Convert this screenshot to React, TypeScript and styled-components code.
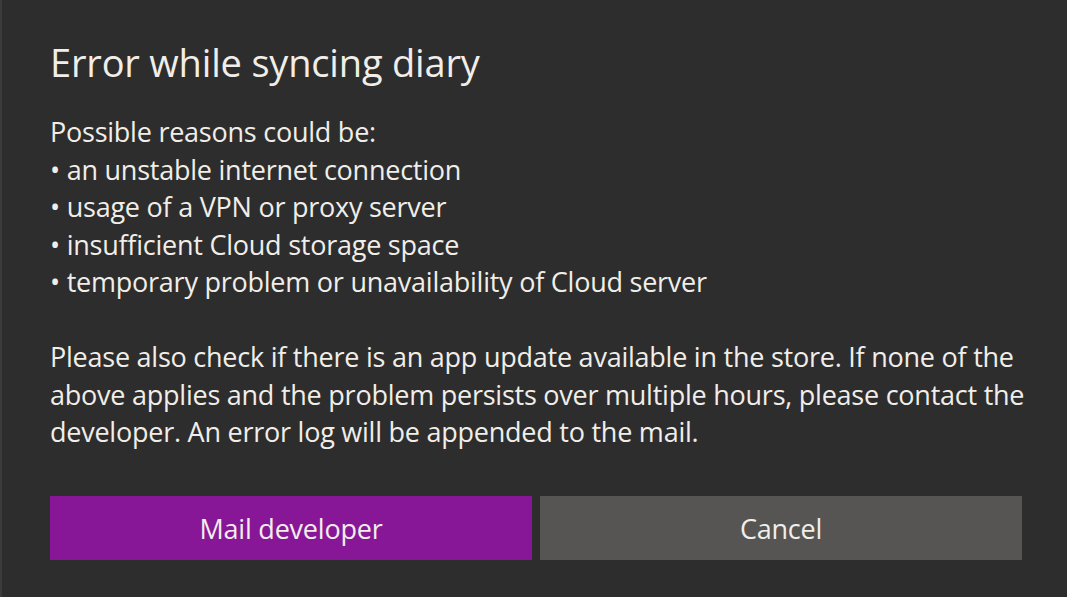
import styled, { createGlobalStyle } from "styled-components";

const COLOR_BACKGROUND = "#2d2d2d";
const COLOR_TEXT = "#f1eeea";
const COLOR_ACCENT = "#881798";
const COLOR_BUTTON = "#565553";

const GlobalStyle = createGlobalStyle`
  html, body {
    margin: 0;
    padding: 0;
    background-color: ${COLOR_BACKGROUND};
  }
  * {
    box-sizing: border-box;
  }
`;

const reasons = [
  "an unstable internet connection",
  "usage of a VPN or proxy server",
  "insufficient Cloud storage space",
  "temporary problem or unavailability of Cloud server",
];

const hintLines = [
  "Please also check if there is an app update available in the store. If none of the",
  "above applies and the problem persists over multiple hours, please contact the",
  "developer. An error log will be appended to the mail.",
];

function App() {
  return (
    <>
      <GlobalStyle />
      <Dialog>
        <Title>Error while syncing diary</Title>
        <Content>
          <Paragraph>Possible reasons could be:</Paragraph>
          <ReasonList>
            {reasons.map((reason) => (
              <Reason key={reason}>• {reason}</Reason>
            ))}
          </ReasonList>
          <Hint>
            {hintLines.map((line) => (
              <Line key={line}>{line}</Line>
            ))}
          </Hint>
        </Content>
        <ButtonRow>
          <Button $primary>Mail developer</Button>
          <Button>Cancel</Button>
        </ButtonRow>
      </Dialog>
    </>
  );
}

const Dialog = styled.div`
  width: 1067px;
  height: 597px;
  padding: 38px 45px 0 48px;
  border-left: 2px solid #3b3b3b;
  background-color: ${COLOR_BACKGROUND};
  color: ${COLOR_TEXT};
  font-family: "Open Sans", "Noto Sans", sans-serif;
  display: flex;
  flex-direction: column;
  overflow: hidden;
`;

const Title = styled.h1`
  margin: 0;
  font-size: 38px;
  line-height: 48px;
  font-weight: 400;
  letter-spacing: -0.18px;
`;

const Content = styled.div`
  margin-top: 27px;
  font-size: 27px;
  line-height: 37.5px;
  letter-spacing: -0.24px;
`;

const Paragraph = styled.p`
  margin: 0;
`;

const ReasonList = styled.ul`
  margin: 0;
  padding: 0;
  list-style: none;
`;

const Reason = styled.li`
  white-space: nowrap;
`;

const Hint = styled.p`
  margin: 37.5px 0 0;
`;

const Line = styled.span`
  display: block;
  white-space: nowrap;
`;

const ButtonRow = styled.div`
  margin-top: 45px;
  display: flex;
  gap: 8px;
`;

const Button = styled.button<{ $primary?: boolean }>`
  flex: 1;
  height: 64px;
  border: none;
  border-radius: 0;
  padding: 2px 0 0;
  background-color: ${({ $primary }) => ($primary ? COLOR_ACCENT : COLOR_BUTTON)};
  color: ${COLOR_TEXT};
  font-family: inherit;
  font-size: 27px;
  letter-spacing: -0.21px;
  cursor: pointer;
`;

export default App;
